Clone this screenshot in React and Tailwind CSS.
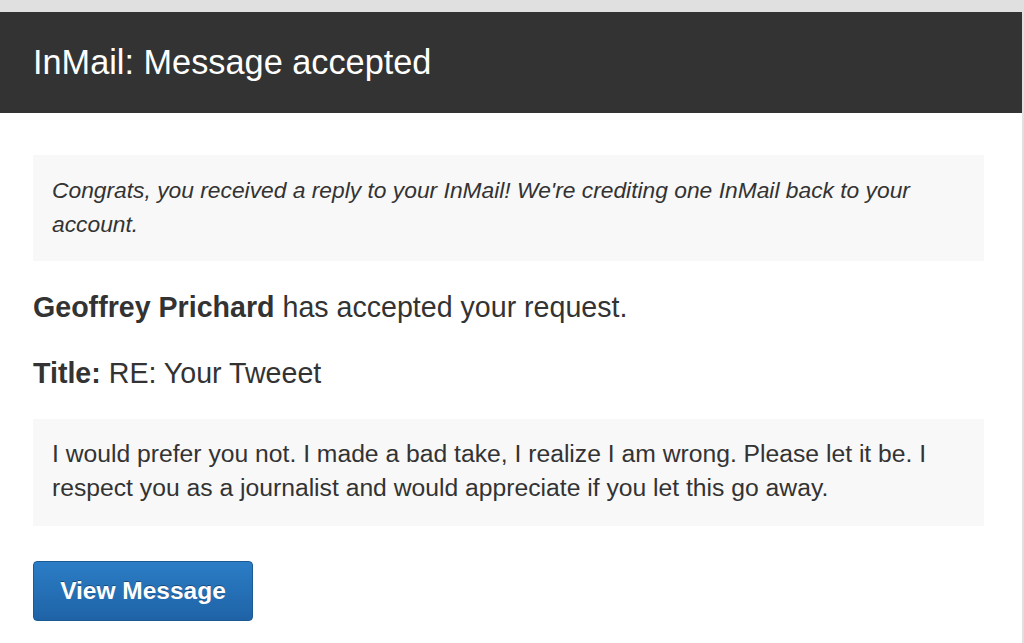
import React from "react";

export default function App() {
  return (
    <div className="min-h-screen bg-[#e0e0e0] pt-[12px] pr-[2px] font-['Liberation_Sans',Arial,sans-serif] text-[#333]">
      <div className="min-h-[631px] bg-white">
        <div className="flex h-[101px] items-center bg-[#333333] px-[33px]">
          <h1 className="text-[34.3px] leading-none text-white">InMail: Message accepted</h1>
        </div>

        <div className="pl-[33px] pr-[38px] pt-[42px]">
          <div className="bg-[#f8f8f8] px-[19px] pt-[18px] pb-[20px]">
            <p className="text-[22.8px] italic leading-[34px]">
              Congrats, you received a reply to your InMail! We're crediting one InMail back to your account.
            </p>
          </div>

          <p className="mt-[26px] text-[28.6px] leading-[40px]">
            <span className="font-bold">Geoffrey Prichard</span> has accepted your request.
          </p>
          <p className="mt-[26px] text-[28.6px] leading-[40px]">
            <span className="font-bold">Title:</span> RE: Your Tweeet
          </p>

          <div className="mt-[26px] bg-[#f8f8f8] px-[19px] pt-[18px] pb-[21px]">
            <p className="text-[24.7px] leading-[34px]">
              I would prefer you not. I made a bad take, I realize I am wrong. Please let it be. I respect you as a journalist and would appreciate if you let this go away.
            </p>
          </div>

          <button className="mt-[35px] h-[60px] w-[220px] rounded-[4px] border border-[#1c5a96] bg-gradient-to-b from-[#2b7dc6] to-[#1f63a6] text-[24.5px] font-bold text-white [text-shadow:0_-1px_0_rgba(0,0,0,0.35)]">
            View Message
          </button>
        </div>
      </div>
    </div>
  );
}
